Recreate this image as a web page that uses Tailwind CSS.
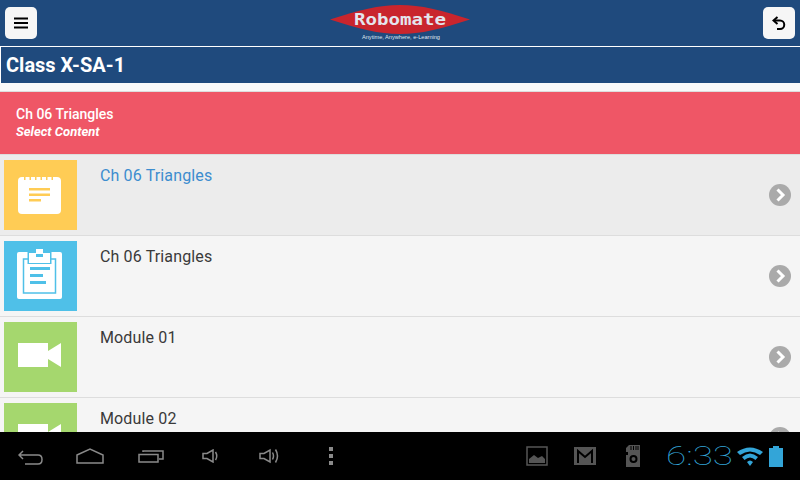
<!DOCTYPE html>
<html lang="en">
<head>
    <meta charset="UTF-8">
    <meta name="viewport" content="width=device-width, initial-scale=1.0">
    <title>Robomate</title>
    <script src="https://cdn.jsdelivr.net/npm/@tailwindcss/browser@4"></script>
</head>
<body class="bg-[#f5f5f5] font-['Roboto',sans-serif]">
<div class="w-[800px] h-[480px] flex flex-col overflow-hidden">

    <!-- top bar -->
    <header class="h-[46px] shrink-0 bg-[#1f4a7d] flex items-start justify-between pl-[5px] pr-[5px] pt-[7px]">
        <button class="w-8 h-8 bg-[#f6f6f6] rounded-[5px] flex items-center justify-center">
            <svg width="14" height="12" viewBox="0 0 14 12"><path d="M0 0.5h14v2H0zM0 5h14v2H0zM0 9.500h14v2H0z" fill="#000"/></svg>
        </button>
        <svg width="142" height="42" viewBox="0 0 142 42" class="-mt-[7px]">
            <path d="M1 19.500C30 10 50 5 71 5C92 5 112 10 141 19.500C112 29 92 34 71 34C50 34 30 29 1 19.500Z" fill="#c9252d"/>
            <text x="71" y="25" text-anchor="middle" font-family="DejaVu Sans Mono" font-weight="700" font-size="16" fill="#e4e6ee" textLength="92" lengthAdjust="spacingAndGlyphs">Robomate</text>
            <text x="72" y="39" text-anchor="middle" font-family="Liberation Sans" font-size="5.500" fill="#dfe6f0" textLength="78" lengthAdjust="spacingAndGlyphs">Anytime, Anywhere, e-Learning</text>
        </svg>
        <button class="w-8 h-8 bg-[#f6f6f6] rounded-[5px] flex items-center justify-center">
            <svg width="14" height="15" viewBox="0 0 14 15"><path d="M5.500 1 1.500 4.500 5.500 8" fill="none" stroke="#000" stroke-width="2"/><path d="M2 4.500h6a4 4 0 0 1 0 8.500H5" fill="none" stroke="#000" stroke-width="2"/></svg>
        </button>
    </header>

    <!-- page title -->
    <div class="h-[37px] shrink-0 bg-[#1f4a7d] border-t border-l border-white flex items-center pl-[5px]">
        <h1 class="text-white text-[20px] font-bold leading-none">Class X-SA-1</h1>
    </div>

    <div class="h-[8px] shrink-0 bg-[#f9f9f9]"></div>

    <!-- chapter banner -->
    <div class="h-[64px] shrink-0 bg-[#ef5666] border-y border-[#dddddd] px-4 pt-[13px] text-white">
        <p class="text-sm font-medium leading-[18px]">Ch 06 Triangles</p>
        <p class="text-[13px] font-bold italic leading-[18px]">Select Content</p>
    </div>

    <!-- content list -->
    <ul class="flex-1 overflow-hidden">
        <li class="h-[81px] bg-[#ececec] border-b border-[#dddddd] flex pl-1 pr-[9px] pt-[5px]">
            <div class="w-[73px] h-[70px] bg-[#ffcc55] pl-[14px] pt-[16px]">
                <svg width="43" height="38" viewBox="0 0 43 38" class="block"><rect x="0" y="1" width="43" height="37" rx="4" fill="#fff"/><path d="M6 0h1.500v4H6zM11.500 0H13v4h-1.500zM17 0h1.500v4H17zM22.500 0H24v4h-1.500zM28 0h1.500v4H28zM33.500 0H35v4h-1.500z" fill="#ffcc55"/><path d="M11 12h21v2.500H11zM11 17.500h21V20H11zM11 23h12v2.500H11z" fill="#ffcc55"/></svg>
            </div>
            <span class="ml-[23px] text-base tracking-[0.14px] leading-[20px] mt-[6px] text-[#3d8dcf] flex-1">Ch 06 Triangles</span>
            <svg width="22" height="22" viewBox="0 0 22 22" class="mt-[24px]"><circle cx="11" cy="11" r="11" fill="#aaaaaa"/><path d="M8.500 5.500 14 11 8.500 16.500" fill="none" stroke="#fff" stroke-width="3"/></svg>
        </li>
        <li class="h-[81px] border-b border-[#dddddd] flex pl-1 pr-[9px] pt-[5px]">
            <div class="w-[73px] h-[70px] bg-[#4fc0e8] pl-[13px] pt-[8px]">
                <svg width="45" height="50" viewBox="0 0 45 50" class="block"><path d="M2 3H43Q45 3 45 5V48Q45 50 43 50H2Q0 50 0 48V5Q0 3 2 3Z" fill="#fff"/><rect x="6.500" y="10" width="32" height="34" fill="none" stroke="#4fc0e8" stroke-width="1.500"/><path d="M10.500 3H34.500V15H10.500Z" fill="#4fc0e8"/><path d="M12 4H19V0H26V4H33V14H12Z" fill="#fff"/><path d="M19 5H26V8H19Z" fill="#4fc0e8"/><path d="M13 18H33V21H13ZM13 25H26V28H13ZM13 32H29V35H13Z" fill="#4fc0e8"/></svg>
            </div>
            <span class="ml-[23px] text-base tracking-[0.14px] leading-[20px] mt-[6px] text-[#3a3a3a] flex-1">Ch 06 Triangles</span>
            <svg width="22" height="22" viewBox="0 0 22 22" class="mt-[24px]"><circle cx="11" cy="11" r="11" fill="#aaaaaa"/><path d="M8.500 5.500 14 11 8.500 16.500" fill="none" stroke="#fff" stroke-width="3"/></svg>
        </li>
        <li class="h-[81px] border-b border-[#dddddd] flex pl-1 pr-[9px] pt-[5px]">
            <div class="w-[73px] h-[70px] bg-[#a5d76e] pl-[14px] pt-[21px]">
                <svg width="43" height="24" viewBox="0 0 43 24" class="block"><path d="M0 0H30V24H0ZM30 8 43 0V24L30 16Z" fill="#fff"/></svg>
            </div>
            <span class="ml-[23px] text-base tracking-[0.14px] leading-[20px] mt-[6px] text-[#3a3a3a] flex-1">Module 01</span>
            <svg width="22" height="22" viewBox="0 0 22 22" class="mt-[24px]"><circle cx="11" cy="11" r="11" fill="#aaaaaa"/><path d="M8.500 5.500 14 11 8.500 16.500" fill="none" stroke="#fff" stroke-width="3"/></svg>
        </li>
        <li class="h-[81px] border-b border-[#dddddd] flex pl-1 pr-[9px] pt-[5px]">
            <div class="w-[73px] h-[70px] bg-[#a5d76e] pl-[14px] pt-[21px]">
                <svg width="43" height="24" viewBox="0 0 43 24" class="block"><path d="M0 0H30V24H0ZM30 8 43 0V24L30 16Z" fill="#fff"/></svg>
            </div>
            <span class="ml-[23px] text-base tracking-[0.14px] leading-[20px] mt-[6px] text-[#3a3a3a] flex-1">Module 02</span>
            <svg width="22" height="22" viewBox="0 0 22 22" class="mt-[24px]"><circle cx="11" cy="11" r="11" fill="#aaaaaa"/><path d="M8.500 5.500 14 11 8.500 16.500" fill="none" stroke="#fff" stroke-width="3"/></svg>
        </li>
    </ul>

    <!-- android system bar -->
    <nav class="h-[48px] shrink-0 bg-black flex items-center pl-[18px]">
        <svg width="25" height="16" viewBox="0 0 25 16" class="mt-[3px]"><path d="M5 1 1 5 5 9M1 5H20Q24 5 24 9.500T20 14H7" fill="none" stroke="#8a8a8a" stroke-width="1.500"/></svg>
        <svg width="28" height="16" viewBox="0 0 28 16" class="ml-[33px]"><path d="M1 7 14 1 27 7V15H1Z" fill="none" stroke="#8a8a8a" stroke-width="1.500"/></svg>
        <svg width="26" height="14" viewBox="0 0 26 14" class="ml-[34px]"><path d="M1 5.500H20V13H1ZM5 3V2H25V10H21" fill="none" stroke="#8a8a8a" stroke-width="1.500"/></svg>
        <svg width="17" height="14" viewBox="0 0 17 14" class="ml-[38px]"><path d="M1 4.500H5L11 1V13L5 9.500H1Z" fill="none" stroke="#8a8a8a" stroke-width="1.500"/><path d="M13.500 3Q16 7 13.500 11" fill="none" stroke="#8a8a8a" stroke-width="1.500"/></svg>
        <svg width="21" height="16" viewBox="0 0 21 16" class="ml-[40px]"><path d="M1 5.500H5L11 2V14L5 10.500H1Z" fill="none" stroke="#8a8a8a" stroke-width="1.500"/><path d="M13.500 4.500Q15.500 8 13.500 11.500M16.500 1.500Q20.500 8 16.500 14.500" fill="none" stroke="#8a8a8a" stroke-width="1.500"/></svg>
        <div class="ml-[49px] flex flex-col gap-[3px]">
            <span class="w-[4px] h-[4px] bg-[#8a8a8a]"></span>
            <span class="w-[4px] h-[4px] bg-[#8a8a8a]"></span>
            <span class="w-[4px] h-[4px] bg-[#8a8a8a]"></span>
        </div>
        <svg width="22" height="20" viewBox="0 0 22 20" class="ml-[193px]"><path d="M1 1H21V19H1Z" fill="none" stroke="#555" stroke-width="1.500"/><path d="M3 17V13L8 9 12 12 16 10 19 13V17Z" fill="#555"/></svg>
        <svg width="22" height="18" viewBox="0 0 22 18" class="ml-[26px]"><path d="M0 0H22V18H0Z" fill="#555"/><path d="M4 16V4L11 10 18 4V16" fill="none" stroke="#000" stroke-width="2"/></svg>
        <svg width="14" height="22" viewBox="0 0 14 22" class="ml-[30px]"><path d="M3 0H14V22H0V10H2V7H0V3Z" fill="#555"/><path d="M5 1V5M7.500 1V5M10 1V5M12 1V5" stroke="#000" stroke-width="1"/><circle cx="7.500" cy="14" r="3" fill="none" stroke="#000" stroke-width="2"/></svg>
        <svg width="68" height="32" viewBox="0 0 68 32" class="ml-[26px]"><text x="0" y="25" font-family="Roboto" font-weight="100" font-size="25" fill="#33a5d8" textLength="67" lengthAdjust="spacingAndGlyphs">6:33</text></svg>
        <svg width="26" height="20" viewBox="0 0 26 20" class="ml-[3px]"><path d="M0 6Q13 -3 26 6L23 9Q13 2 3 9Z M5 11Q13 4 21 11L18.500 14Q13 9 7.500 14Z M10 16Q13 13 16 16L13 20Z" fill="#33a5d8"/></svg>
        <svg width="14" height="21" viewBox="0 0 14 21" class="ml-[6px]"><path d="M4 0H10V2H14V21H0V2H4Z" fill="#33a5d8"/></svg>
    </nav>
</div>
</body>
</html>
